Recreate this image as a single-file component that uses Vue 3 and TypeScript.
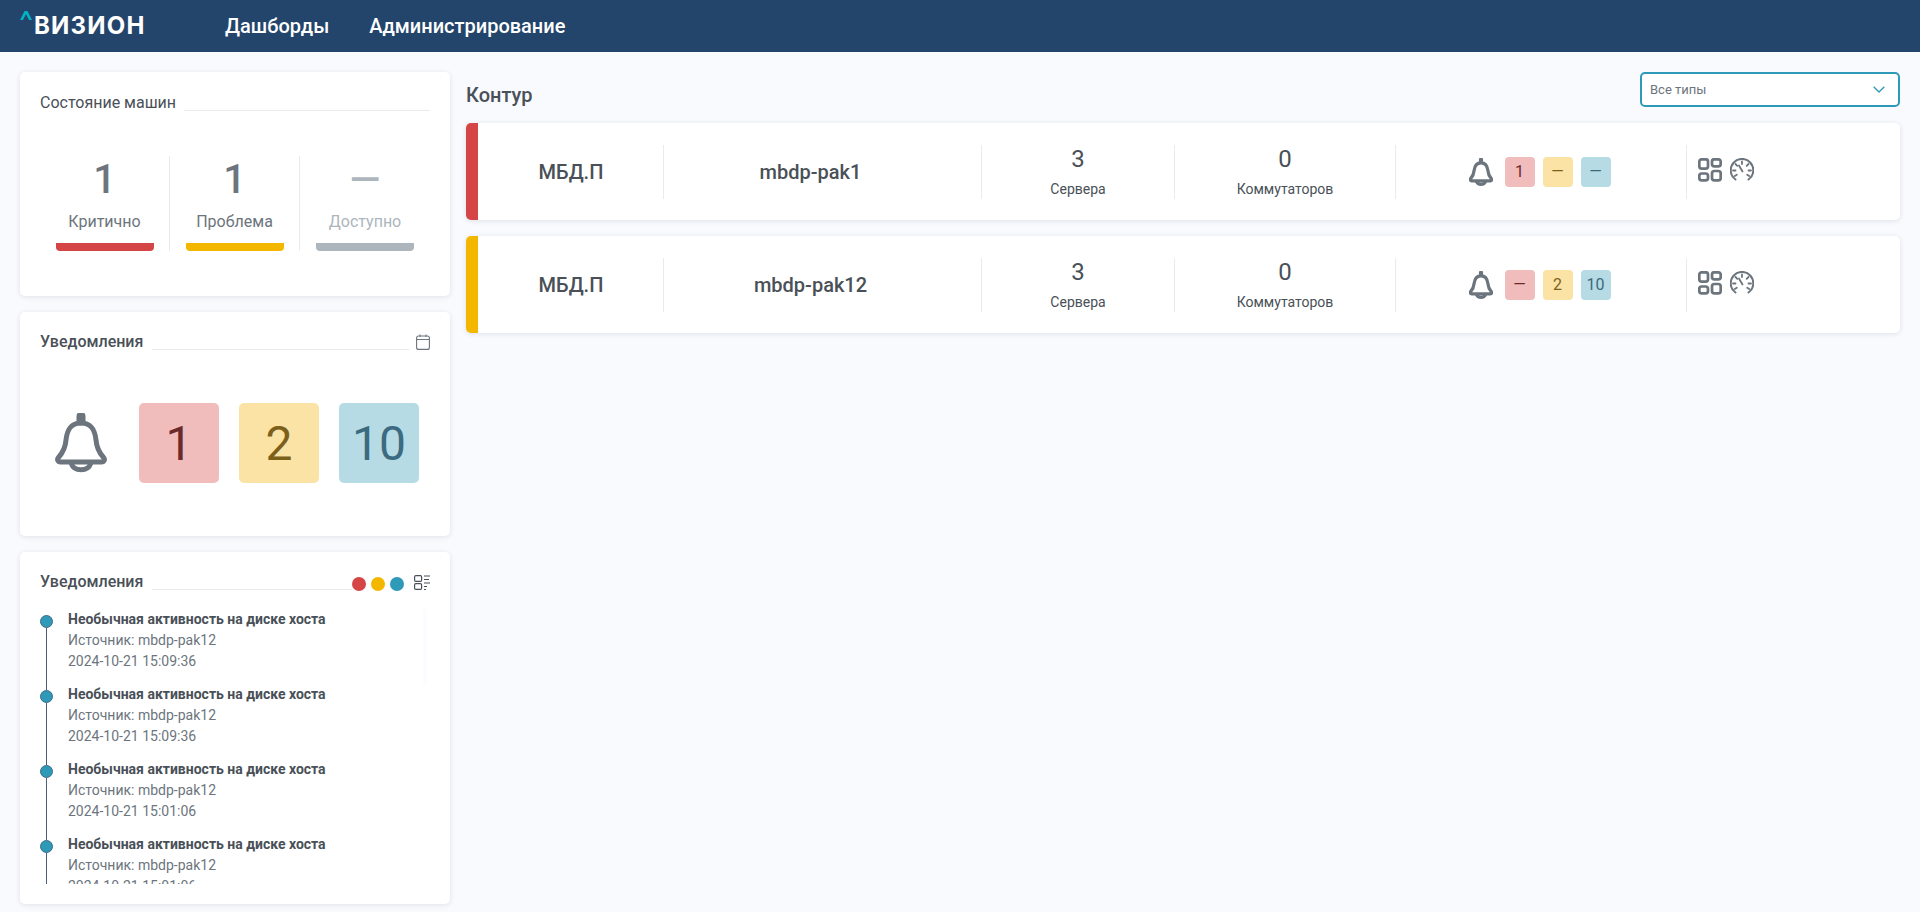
<template>
  <div class="page">
    <svg class="sprite" aria-hidden="true">
      <symbol id="bell" viewBox="0 0 52 60">
        <g fill="none" stroke="currentColor" stroke-linecap="round" stroke-linejoin="round">
          <path d="M26 3v5" stroke-width="9" />
          <path d="M26 10C15 10 12 18 11 27C10.400 35 7.500 40 3.500 44.500C1.700 46.600 2.800 49 5.500 49H46.500C49.200 49 50.300 46.600 48.500 44.500C44.500 40 41.600 35 41 27C40 18 37 10 26 10Z" />
          <path d="M16.500 51C19 58.500 33 58.500 35.500 51" />
        </g>
      </symbol>
      <symbol id="grid" viewBox="0 0 24 24">
        <g fill="none" stroke="currentColor" stroke-width="2.700">
          <rect x="1.300" y="1.300" width="8.700" height="9.400" rx="2.400" />
          <rect x="14" y="1.300" width="8.700" height="7" rx="2.400" />
          <rect x="1.300" y="15.500" width="8.700" height="6.800" rx="2.400" />
          <rect x="14" y="13" width="8.700" height="9.300" rx="2.400" />
        </g>
      </symbol>
      <symbol id="gauge" viewBox="0 0 24 24">
        <g fill="none" stroke="currentColor" stroke-linecap="round">
          <path d="M5.500 21.500A11.300 11.300 0 1 1 18.500 21.500" stroke-width="2.100" />
          <path d="M12 3.500v2.500M5.500 6l1.800 1.800M18.500 6l-1.800 1.800M3 12.500h2.500M18.500 12.500h2.500M4.800 18l2-1.200M19.200 18l-2-1.200" stroke-width="1.800" />
          <path d="M9 7.500l3.500 6" stroke-width="1.800" />
        </g>
      </symbol>
    </svg>

    <header class="topbar">
      <div class="logo">
        <svg class="logo-mark" viewBox="0 0 12 9"><path d="M0 9L4.500 0H7.500L12 9H9L6 3L3 9Z" /></svg>
        <span>ВИЗИОН</span>
      </div>
      <nav class="nav">
        <span>Дашборды</span>
        <span>Администрирование</span>
      </nav>
    </header>

    <main class="content">
      <aside class="sidebar">
        <section class="card state-card">
          <div class="card-head">
            <h3>Состояние машин</h3>
            <div class="head-line"></div>
          </div>
          <div class="stats">
            <div v-for="s in stats" :key="s.label" class="stat" :class="{ muted: s.muted }">
              <div class="stat-num">{{ s.value }}</div>
              <div class="stat-label">{{ s.label }}</div>
              <div class="stat-bar" :class="s.tone"></div>
            </div>
          </div>
        </section>

        <section class="card summary-card">
          <div class="card-head">
            <h3 class="medium">Уведомления</h3>
            <div class="head-line"></div>
            <svg class="calendar" viewBox="0 0 14 16">
              <g fill="none" stroke="currentColor" stroke-width="1.100">
                <rect x="0.600" y="2" width="12.800" height="13.400" rx="2" />
                <path d="M0.600 5.500H13.400M4 0.500V3M10 0.500V3" />
              </g>
            </svg>
          </div>
          <div class="summary">
            <svg class="bell-big"><use href="#bell" /></svg>
            <div v-for="b in summary" :key="b.tone" class="big-badge" :class="b.tone">{{ b.value }}</div>
          </div>
        </section>

        <section class="card feed-card">
          <div class="card-head">
            <h3 class="medium">Уведомления</h3>
            <div class="head-line"></div>
            <div class="dots">
              <i class="dot red"></i>
              <i class="dot yellow"></i>
              <i class="dot blue"></i>
            </div>
            <svg class="list-icon" viewBox="0 0 16 15">
              <g fill="none" stroke="currentColor" stroke-width="1.200">
                <rect x="0.600" y="0.600" width="7" height="5.800" rx="1.200" />
                <rect x="0.600" y="8.600" width="7" height="5.800" rx="1.200" />
                <path d="M10 1h6M10 4.500h5M10 8h6M10 11.500h3M10 14.500h2" />
              </g>
            </svg>
          </div>
          <div class="feed">
            <div class="thumb"></div>
            <div v-for="(n, i) in feed" :key="i" class="feed-item">
              <div class="feed-title">Необычная активность на диске хоста</div>
              <div>Источник: {{ n.source }}</div>
              <div>{{ n.time }}</div>
            </div>
          </div>
        </section>
      </aside>

      <div class="main-col">
        <div class="main-head">
          <h2>Контур</h2>
          <div class="select">
            <span>Все типы</span>
            <svg viewBox="0 0 12 7"><path d="M0.700 0.700L6 6L11.300 0.700" /></svg>
          </div>
        </div>

        <div v-for="r in rows" :key="r.name" class="row" :class="r.tone">
          <div class="cell strong">МБД.П</div>
          <div class="cell strong name">{{ r.name }}</div>
          <div class="cell count">
            <b>{{ r.servers }}</b>
            <span>Сервера</span>
          </div>
          <div class="cell count">
            <b>{{ r.switches }}</b>
            <span>Коммутаторов</span>
          </div>
          <div class="cell alerts">
            <svg class="bell-small"><use href="#bell" /></svg>
            <span class="badge red">{{ r.alerts[0] }}</span>
            <span class="badge yellow">{{ r.alerts[1] }}</span>
            <span class="badge blue">{{ r.alerts[2] }}</span>
          </div>
          <div class="cell actions">
            <svg><use href="#grid" /></svg>
            <svg><use href="#gauge" /></svg>
          </div>
        </div>
      </div>
    </main>
  </div>
</template>

<script setup lang="ts">
interface Stat {
  value: string;
  label: string;
  tone: string;
  muted?: boolean;
}

const stats: Stat[] = [
  { value: '1', label: 'Критично', tone: 'red' },
  { value: '1', label: 'Проблема', tone: 'yellow' },
  { value: '—', label: 'Доступно', tone: 'grey', muted: true }
];

const summary = [
  { value: '1', tone: 'red' },
  { value: '2', tone: 'yellow' },
  { value: '10', tone: 'blue' }
];

const feed = [
  { source: 'mbdp-pak12', time: '2024-10-21 15:09:36' },
  { source: 'mbdp-pak12', time: '2024-10-21 15:09:36' },
  { source: 'mbdp-pak12', time: '2024-10-21 15:01:06' },
  { source: 'mbdp-pak12', time: '2024-10-21 15:01:06' }
];

const rows = [
  { name: 'mbdp-pak1', tone: 'red', servers: 3, switches: 0, alerts: ['1', '—', '—'] },
  { name: 'mbdp-pak12', tone: 'yellow', servers: 3, switches: 0, alerts: ['—', '2', '10'] }
];
</script>

<style>
html,
body {
  background: #f9fafe;
}
</style>

<style scoped>
.page {
  height: 912px;
  overflow: hidden;
  background: #f9fafe;
  font-family: Roboto, "Liberation Sans", sans-serif;
  color: #495057;
}

.sprite {
  position: absolute;
  width: 0;
  height: 0;
}

.topbar {
  height: 52px;
  padding-left: 20px;
  display: flex;
  align-items: center;
  background: #23456b;
  color: #fff;
}

.logo {
  width: 205px;
  display: flex;
  align-items: flex-start;
  font-family: Inter, sans-serif;
  font-size: 24px;
  font-weight: 700;
  line-height: 30px;
  letter-spacing: 1.200px;
}

.logo-mark {
  width: 12px;
  height: 9px;
  margin: 0 2px 0 0;
  fill: #00b3c4;
}

.nav {
  display: flex;
  gap: 40px;
  font-size: 20px;
  font-weight: 500;
}

.content {
  display: flex;
  gap: 16px;
  padding: 20px 20px 0;
}

.sidebar {
  width: 430px;
  flex: none;
  display: flex;
  flex-direction: column;
  gap: 16px;
}

.card {
  box-sizing: border-box;
  background: #fff;
  border-radius: 5px;
  box-shadow: 0 1px 5px rgba(40, 50, 70, 0.12);
  padding: 20px;
}

.state-card,
.summary-card {
  height: 224px;
}

.feed-card {
  height: 352px;
}

.card-head {
  display: flex;
  align-items: flex-end;
  height: 18px;
}

.state-card .card-head {
  margin-top: 1px;
}

.card-head h3 {
  margin: 0 8px 0 0;
  font-size: 16px;
  font-weight: 400;
  line-height: 16px;
  color: #495057;
  white-space: nowrap;
}

.card-head h3.medium {
  font-weight: 500;
  margin-right: 9px;
}

.head-line {
  flex: 1;
  border-bottom: 1px solid #e9ecef;
}

.stats {
  display: flex;
  margin-top: 45px;
}

.stat {
  box-sizing: border-box;
  width: 130px;
  height: 95px;
  position: relative;
  display: flex;
  flex-direction: column;
  align-items: center;
}

.stat:not(:last-child) {
  border-right: 1px solid #e9ecef;
}

.stat-num {
  font-size: 40px;
  font-weight: 500;
  line-height: 48px;
  color: #6c757d;
}

.stat-label {
  margin-top: 8px;
  font-size: 16px;
  line-height: 20px;
  color: #6c757d;
}

.stat.muted .stat-num,
.stat.muted .stat-label {
  color: #adb5bd;
}

.stat-bar {
  position: absolute;
  left: 16px;
  bottom: 0;
  width: 98px;
  height: 8px;
  border-radius: 0 0 4px 4px;
}

.stat-bar.red {
  background: #d64545;
}

.stat-bar.yellow {
  background: #f4b700;
}

.stat-bar.grey {
  background: #adb5bd;
}

.calendar {
  width: 14px;
  height: 16px;
  margin-left: 7px;
  flex: none;
  color: #6c757d;
}

.summary {
  display: flex;
  align-items: center;
  gap: 20px;
  margin-top: 53px;
  padding-left: 15px;
}

.bell-big {
  flex: none;
  width: 52px;
  height: 60px;
  margin-right: 12px;
  color: #6c757d;
  stroke-width: 5;
}

.big-badge {
  flex: none;
  width: 80px;
  height: 80px;
  border-radius: 5px;
  display: flex;
  align-items: center;
  justify-content: center;
  font-size: 48px;
  font-weight: 400;
}

.red.big-badge,
.badge.red {
  background: #f0bcbc;
  color: #6b2b2b;
}

.yellow.big-badge,
.badge.yellow {
  background: #fae3a4;
  color: #7d5f1c;
}

.blue.big-badge,
.badge.blue {
  background: #b6dbe4;
  color: #3c6a80;
}

.dots {
  display: flex;
  margin: 0 10px 0 0;
  gap: 5px;
  position: relative;
  top: 1px;
}

.dot {
  width: 14px;
  height: 14px;
  border-radius: 50%;
}

.dot.red {
  background: #d64545;
}

.dot.yellow {
  background: #f4b700;
}

.dot.blue {
  background: #2e9ab8;
}

.list-icon {
  width: 16px;
  height: 15px;
  flex: none;
  color: #495057;
}

.feed {
  position: relative;
  height: 275px;
  margin-top: 19px;
  overflow: hidden;
  font-size: 14px;
  line-height: 21px;
  color: #6c757d;
}

.thumb {
  position: absolute;
  top: 0;
  right: 3px;
  width: 4px;
  height: 75px;
  background: #fbfcfd;
}

.feed-item {
  position: relative;
  height: 75px;
  padding-left: 28px;
}

.feed-item::before {
  content: "";
  position: absolute;
  left: 0;
  top: 6px;
  box-sizing: border-box;
  width: 13px;
  height: 13px;
  border-radius: 50%;
  background: #2e9ab8;
  border: 1px solid #3d6c86;
}

.feed-item::after {
  content: "";
  position: absolute;
  left: 6px;
  top: 19px;
  bottom: -6px;
  width: 1px;
  background: #4a5f75;
}

.feed-title {
  font-weight: 700;
  color: #495057;
}

.main-col {
  flex: 1;
  display: flex;
  flex-direction: column;
  gap: 16px;
}

.main-head {
  height: 35px;
  display: flex;
  align-items: flex-start;
  justify-content: space-between;
}

.main-head h2 {
  margin: 11px 0 0;
  font-size: 20px;
  font-weight: 500;
  line-height: 24px;
  color: #495057;
}

.select {
  box-sizing: border-box;
  width: 260px;
  height: 35px;
  padding: 0 13px 0 8px;
  display: flex;
  align-items: center;
  justify-content: space-between;
  background: #fff;
  border: 2px solid #2e9ab8;
  border-radius: 5px;
  font-size: 13px;
  color: #6c757d;
}

.select svg {
  width: 12px;
  height: 7px;
  fill: none;
  stroke: #2e9ab8;
  stroke-width: 1.300;
}

.row {
  box-sizing: border-box;
  height: 97px;
  display: grid;
  grid-template-columns: 186px 318px 193px 221px 291px 1fr;
  align-items: center;
  background: #fff;
  border-left: 12px solid;
  border-radius: 5px;
  box-shadow: 0 1px 5px rgba(40, 50, 70, 0.12);
}

.row.red {
  border-left-color: #d64545;
}

.row.yellow {
  border-left-color: #f4b700;
}

.cell {
  box-sizing: border-box;
  height: 54px;
  display: flex;
  align-items: center;
  justify-content: center;
  border-right: 1px solid #e9ecef;
}

.cell:last-child {
  border-right: 0;
}

.strong {
  padding-left: 1px;
  font-size: 20px;
  font-weight: 500;
  color: #495057;
}

.strong.name {
  padding: 0 24px 0 0;
}

.count {
  flex-direction: column;
  justify-content: flex-start;
}

.count b {
  font-size: 24px;
  font-weight: 400;
  line-height: 28px;
}

.count span {
  margin-top: 6px;
  font-size: 14px;
  line-height: 20px;
}

.alerts {
  gap: 8px;
  padding-right: 3px;
}

.bell-small {
  width: 24px;
  height: 28px;
  margin-right: 4px;
  color: #6c757d;
  stroke-width: 7;
}

.badge {
  width: 30px;
  height: 30px;
  border-radius: 4px;
  display: flex;
  align-items: center;
  justify-content: center;
  font-size: 16px;
}

.actions {
  justify-content: flex-start;
  align-items: flex-start;
  gap: 8px;
  padding: 13px 0 0 11px;
  color: #6c757d;
}

.actions svg {
  width: 24px;
  height: 24px;
}
</style>
